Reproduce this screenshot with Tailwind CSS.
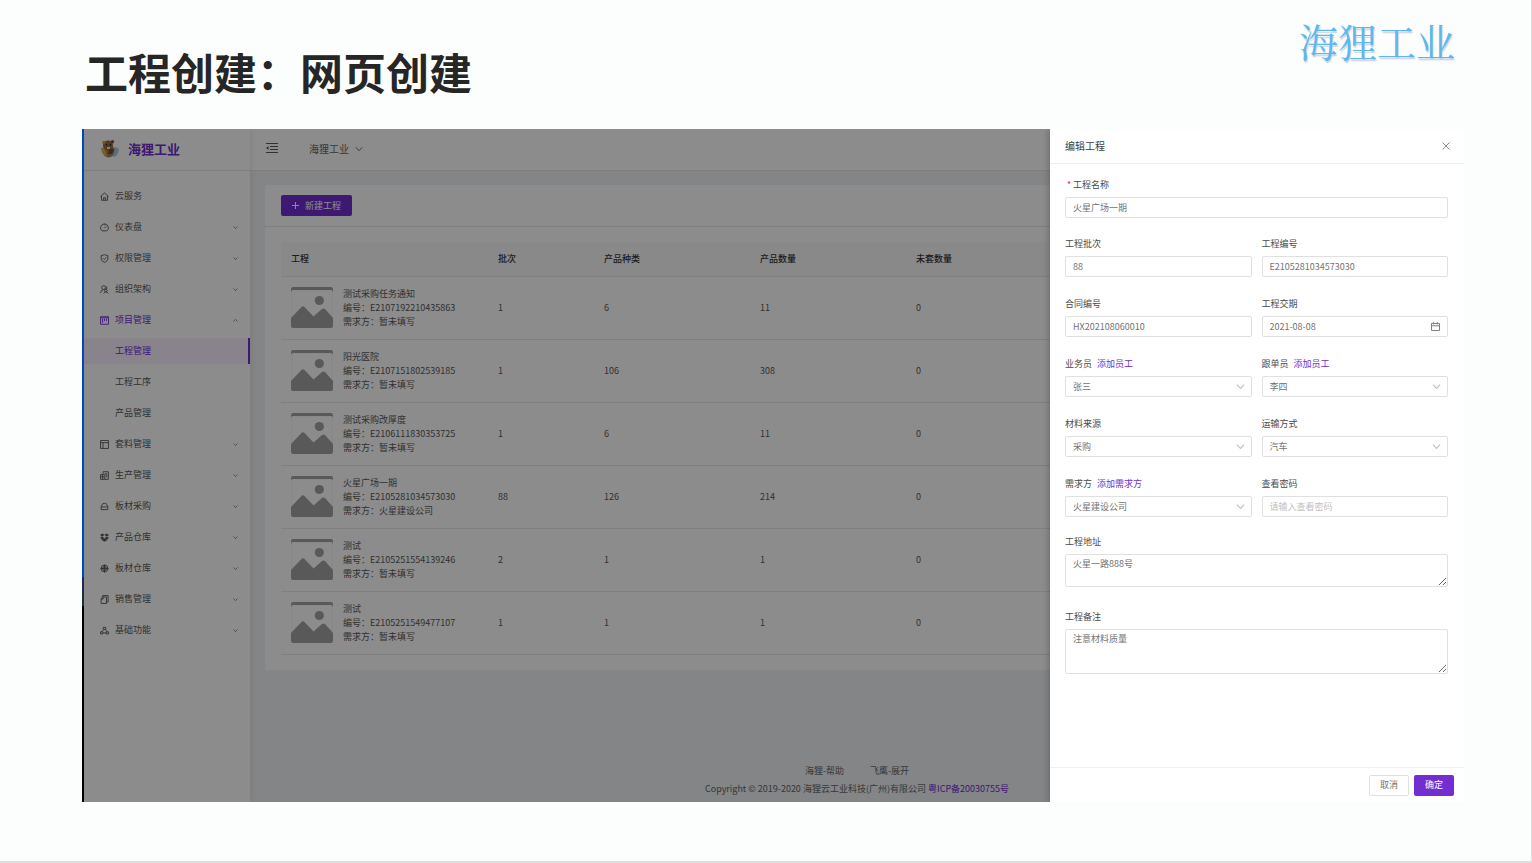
<!DOCTYPE html>
<html lang="zh-CN">
<head>
<meta charset="utf-8">
<title>工程创建：网页创建</title>
<script src="https://cdn.jsdelivr.net/npm/@tailwindcss/browser@4"></script>
</head>
<body class="min-h-screen bg-[#fcfefd] font-['Noto_Sans_CJK_SC',sans-serif]">
<svg class="hidden" aria-hidden="true">
  <symbol id="down" viewBox="0 0 10 10"><path d="M1 2.8 5 7.2 9 2.8" fill="none" stroke="currentColor" stroke-width="1.2"/></symbol>
  <symbol id="thumb" viewBox="0 0 42 42"><path d="M1 3h40v36H1z" fill="none" stroke="#000" stroke-opacity=".05"/><path d="M0 5V2q0-2 2-2h38q2 0 2 2v3l-1-2H1z" fill="#a3a3a3"/><circle cx="28.300" cy="13.500" r="4.600" fill="#a3a3a3"/><path d="M0 31 10.500 20q1.500-1.500 3 0L22.500 29.500 31 22q1.500-1 3 0l8 9v8q0 2-2 2H2q-2 0-2-2z" fill="#a3a3a3"/></symbol>
</svg>
<main class="flex min-h-screen flex-col border-r border-b-2 border-[#dcdddf]">
  <header class="flex h-[129px] shrink-0 items-start justify-between pr-[76px] pl-[85px]">
    <h1 class="pt-[39px] text-[43px] leading-[64px] font-bold text-[#262626]">工程创建：网页创建</h1>
    <div class="pt-4 font-['Noto_Serif_CJK_SC','Noto_Sans_CJK_SC',serif] text-[39px] leading-[48px] font-normal text-[#5bb8f0] text-shadow-[1px_2px_1px_#d2d2dc]">海狸工业</div>
  </header>

  <section class="relative mr-[67px] mb-[59px] ml-[82px] flex grow overflow-hidden text-[9px] leading-[14px] text-[#595959]">
    <div class="w-0.5 shrink-0 bg-linear-[to_bottom,#0046c8_66.600%,#1c2d4b_66.600%,#1c2d4b_70.900%,#000_70.900%]"></div>
    <div class="relative flex grow">
      <aside class="z-1 w-[166px] shrink-0 bg-white shadow-[2px_0_6px_rgba(0,21,41,.06)]">
        <div class="flex h-[42px] items-center gap-2 border-b border-[#e8e8e8] pb-px pl-4 text-[13px] font-bold text-[#722ed1]">
          <svg class="size-5" viewBox="0 0 20 20"><path d="M10 9q7-2 9 1-1 8-6 8z" fill="#a9cbe6"/><ellipse cx="8.500" cy="12" rx="6" ry="6.500" fill="#a57d5c"/><circle cx="8" cy="6.500" r="5" fill="#9a6840"/><circle cx="3.800" cy="3.400" r="1.600" fill="#d7a33c"/><circle cx="12.500" cy="2.700" r="1.700" fill="#785038"/><path d="M1 9q3-1 4 2l2 6q-5 0-6-8z" fill="#ddb04c"/><path d="M9 10h5l-2 5H8z" fill="#6e4c38"/><circle cx="6.500" cy="5.800" r=".8" fill="#222"/><circle cx="10.500" cy="5.800" r=".8" fill="#222"/><path d="M7 8h3v2H7z" fill="#f1e4cf"/></svg>
          海狸工业
        </div>
        <nav class="flex flex-col gap-[5px] pt-3 *:flex *:h-[26px] *:items-center *:pr-3 *:pl-4">
          <a href="#"><svg class="mr-1.5 size-[9px]" viewBox="0 0 10 10" fill="none" stroke="currentColor"><path d="M.5 5.200 5 1l4.500 4.200M1.700 4.500v4.700h6.600V4.500M4 9V6.300h2V9"/></svg>云服务</a>
          <a href="#"><svg class="mr-1.5 size-[9px]" viewBox="0 0 10 10" fill="none" stroke="currentColor"><path d="M2.300 8.700a4.300 4.300 0 1 1 5.400 0zM5 5.800 7 3.500M5 1.500v1"/></svg><span class="grow">仪表盘</span><svg class="size-[5px]"><use href="#down"/></svg></a>
          <a href="#"><svg class="mr-1.5 size-[9px]" viewBox="0 0 10 10" fill="none" stroke="currentColor"><path d="M1.300 1.800 5 .8l3.700 1v4Q8 8.500 5 9.300 2 8.500 1.300 5.800zM3.300 4.800l1.400 1.400 2.300-2.500"/></svg><span class="grow">权限管理</span><svg class="size-[5px]"><use href="#down"/></svg></a>
          <a href="#"><svg class="mr-1.5 size-[9px]" viewBox="0 0 10 10" fill="none" stroke="currentColor"><circle cx="4" cy="2.900" r="2.100"/><path d="M.6 9q0-3.500 3.400-4M6.500 1.300q2.300.9.700 3.400"/><circle cx="6.500" cy="6.200" r="1.400"/><path d="M4.200 9.500Q5 7.500 6.500 7.500T9.300 9.500"/></svg><span class="grow">组织架构</span><svg class="size-[5px]"><use href="#down"/></svg></a>
          <a href="#" class="text-[#722ed1]"><svg class="mr-1.5 size-[9px]" viewBox="0 0 10 10" fill="none" stroke="currentColor"><path d="M.6.800h8.800v8.400H.6zM2.800 3v4.500M5 3v2.500M7.200 3v2.500M.6 2h8.800"/></svg><span class="grow">项目管理</span><svg class="size-[5px] rotate-180 text-[#595959]"><use href="#down"/></svg></a>
          <a href="#" class="border-r-2 border-[#722ed1] bg-[#f9f0ff] text-[#722ed1]"><span class="pl-[15px]">工程管理</span></a>
          <a href="#"><span class="pl-[15px]">工程工序</span></a>
          <a href="#"><span class="pl-[15px]">产品管理</span></a>
          <a href="#"><svg class="mr-1.5 size-[9px]" viewBox="0 0 10 10" fill="none" stroke="currentColor"><path d="M.6.600h8.800v8.800H.6zM.6 3h8.800M3.300 3v6.400"/></svg><span class="grow">套料管理</span><svg class="size-[5px]"><use href="#down"/></svg></a>
          <a href="#"><svg class="mr-1.5 size-[9px]" viewBox="0 0 10 10" fill="none" stroke="currentColor"><path d="M3.500 3V.8H9.300v8.500H5.500M.6 4h4.800v5.300H.6zM3 4v5M.6 6.500h4.800M5.500 3h2v4"/></svg><span class="grow">生产管理</span><svg class="size-[5px]"><use href="#down"/></svg></a>
          <a href="#"><svg class="mr-1.5 size-[9px]" viewBox="0 0 10 10" fill="none" stroke="currentColor"><path d="M1.300 5 2.500 3q0-1.500 2.500-1.500T7.500 3l1.200 2v3.500H1.300zM1.300 5.500h7.400"/></svg><span class="grow">板材采购</span><svg class="size-[5px]"><use href="#down"/></svg></a>
          <a href="#"><svg class="mr-1.5 size-[9px]" viewBox="0 0 10 10" fill="currentColor"><path d="M3 .6 5 2.200 2.300 4 0 2.200zM7 .6l3 1.600L7.700 4 5 2.200zM0 5.500 2.300 4 5 5.800 3 7.200zM10 5.500 7.700 4 5 5.800l2 1.400zM1.800 6.800 3 7.600 5 6.200l2 1.400 1.200-.8v1L5 9.800 1.800 7.800z"/></svg><span class="grow">产品仓库</span><svg class="size-[5px]"><use href="#down"/></svg></a>
          <a href="#"><svg class="mr-1.5 size-[9px]" viewBox="0 0 10 10" fill="none" stroke="currentColor"><circle cx="5" cy="5" r="3.800"/><path d="M5 .500v9M.5 5h9M3.300 3.300h3.400v3.400H3.300z"/></svg><span class="grow">板材仓库</span><svg class="size-[5px]"><use href="#down"/></svg></a>
          <a href="#"><svg class="mr-1.5 size-[9px]" viewBox="0 0 10 10" fill="none" stroke="currentColor"><path d="M3 2V.6h6v7.200H7.300M1.200 4 3.300 2.200h3.900v7.200h-6zM3.500 2.500v2H1.300"/></svg><span class="grow">销售管理</span><svg class="size-[5px]"><use href="#down"/></svg></a>
          <a href="#"><svg class="mr-1.5 size-[9px]" viewBox="0 0 10 10" fill="none" stroke="currentColor"><path d="M3.600 1.500h2.800v2.300H3.600zM.6 6.500h2.600v2.300H.6zM6.800 6.500h2.600v2.300H6.800zM3.200 7.700h3.600M1.900 6.500 4 4M8.100 6.500 6 4"/></svg><span class="grow">基础功能</span><svg class="size-[5px]"><use href="#down"/></svg></a>
        </nav>
      </aside>

      <div class="flex grow flex-col bg-[#f0f2f5]">
        <div class="flex h-[42px] shrink-0 items-center border-b border-[#e4e6e9] bg-white pb-px pl-[15px]">
          <button aria-label="收起菜单" class="mr-[30px] pb-0.5"><svg class="h-3 w-3.5" viewBox="0 0 14 12" fill="none" stroke="#595959"><path d="M1 1.500h12M5 4.500h8M5 7.500h8M1 10.500h12"/><path d="M3.500 4v4L1 6z" fill="#595959" stroke="none"/></svg></button>
          <button class="flex items-center gap-1.5 text-[10px] text-[#666]">海狸工业<svg class="size-2"><use href="#down"/></svg></button>
        </div>
        <div class="mx-[15px] mt-3.5 rounded-xs bg-white pb-[15px]">
          <div class="flex h-[42px] items-center border-b border-[#e8e8e8] px-4">
            <button class="flex h-[21px] w-[71px] items-center justify-center gap-1.5 rounded-xs bg-[#722ed1] text-white"><svg class="size-[7px]" viewBox="0 0 7 7"><path d="M3.500 0v7M0 3.500h7" stroke="#fff"/></svg>新建工程</button>
          </div>
          <div class="px-4 pt-[15px]">
            <table class="w-full table-fixed border-collapse text-left *:*:border-b *:*:border-[#e8e8e8]">
              <colgroup><col class="w-[207px]"><col class="w-[106px]"><col class="w-[156px]"><col class="w-[156px]"><col class="w-[156px]"><col></colgroup>
              <thead><tr class="h-[34px] bg-[#fafafa] text-[#333] *:pl-2.5 *:font-medium"><th>工程</th><th>批次</th><th>产品种类</th><th>产品数量</th><th>未套数量</th><td></td></tr></thead>
              <tbody>
                <tr class="h-[63px] *:pl-2.5"><td><div class="flex gap-2.5"><svg class="size-[42px]"><use href="#thumb"/></svg><p>测试采购任务通知<br>编号：E2107192210435863<br>需求方：暂未填写</p></div></td><td>1</td><td>6</td><td>11</td><td>0</td><td></td></tr>
                <tr class="h-[63px] *:pl-2.5"><td><div class="flex gap-2.5"><svg class="size-[42px]"><use href="#thumb"/></svg><p>阳光医院<br>编号：E2107151802539185<br>需求方：暂未填写</p></div></td><td>1</td><td>106</td><td>308</td><td>0</td><td></td></tr>
                <tr class="h-[63px] *:pl-2.5"><td><div class="flex gap-2.5"><svg class="size-[42px]"><use href="#thumb"/></svg><p>测试采购改厚度<br>编号：E2106111830353725<br>需求方：暂未填写</p></div></td><td>1</td><td>6</td><td>11</td><td>0</td><td></td></tr>
                <tr class="h-[63px] *:pl-2.5"><td><div class="flex gap-2.5"><svg class="size-[42px]"><use href="#thumb"/></svg><p>火星广场一期<br>编号：E2105281034573030<br>需求方：火星建设公司</p></div></td><td>88</td><td>126</td><td>214</td><td>0</td><td></td></tr>
                <tr class="h-[63px] *:pl-2.5"><td><div class="flex gap-2.5"><svg class="size-[42px]"><use href="#thumb"/></svg><p>测试<br>编号：E2105251554139246<br>需求方：暂未填写</p></div></td><td>2</td><td>1</td><td>1</td><td>0</td><td></td></tr>
                <tr class="h-[63px] *:pl-2.5"><td><div class="flex gap-2.5"><svg class="size-[42px]"><use href="#thumb"/></svg><p>测试<br>编号：E2105251549477107<br>需求方：暂未填写</p></div></td><td>1</td><td>1</td><td>1</td><td>0</td><td></td></tr>
              </tbody>
            </table>
          </div>
        </div>
        <footer class="mt-auto pb-1 text-center text-[#666] *:leading-[18px]">
          <div class="flex justify-center gap-[26px]"><a href="#">海狸-帮助</a><a href="#">飞鹰-展开</a></div>
          <p>Copyright © 2019-2020 海狸云工业科技(广州)有限公司 <a href="#" class="text-[#722ed1]">粤ICP备20030755号</a></p>
        </footer>
      </div>
      <div class="absolute inset-0 z-10 bg-black/45"></div>
    </div>

    <aside class="absolute inset-y-0 right-0 z-20 flex w-[414px] flex-col bg-white shadow-[-2px_0_6px_rgba(0,0,0,.2)]">
      <div class="flex h-[35px] shrink-0 items-center justify-between border-b border-[#efefef] pr-3.5 pl-[15px]">
        <h2 class="text-[10px] text-[#404040]">编辑工程</h2>
        <button aria-label="关闭"><svg class="size-2" viewBox="0 0 8 8"><path d="M.5.500l7 7M7.500.500l-7 7" stroke="#8c8c8c"/></svg></button>
      </div>
      <form class="grow pt-[13px] pr-4 pl-[15px] text-[#737373]">
        <div class="mb-[18px] flex flex-col gap-1"><label for="name" class="flex leading-4 text-[#4a4a4a]"><span class="w-2 pl-0.5 text-[#f5222d]">*</span>工程名称</label><input id="name" value="火星广场一期" class="h-[21px] w-full rounded-xs border border-[#e0e0e0] px-[7px]"></div>
        <div class="mb-[17px] grid grid-cols-2 gap-x-2.5 gap-y-[19px] *:flex *:flex-col *:gap-1">
          <div><label for="batch" class="leading-4 text-[#4a4a4a]">工程批次</label><input id="batch" value="88" class="h-[21px] w-full rounded-xs border border-[#e0e0e0] px-[7px]"></div>
          <div><label for="code" class="leading-4 text-[#4a4a4a]">工程编号</label><input id="code" value="E2105281034573030" class="h-[21px] w-full rounded-xs border border-[#e0e0e0] px-[7px]"></div>
          <div><label for="contract" class="leading-4 text-[#4a4a4a]">合同编号</label><input id="contract" value="HX202108060010" class="h-[21px] w-full rounded-xs border border-[#e0e0e0] px-[7px]"></div>
          <div><label for="date" class="leading-4 text-[#4a4a4a]">工程交期</label><div class="relative"><input id="date" value="2021-08-08" class="block h-[21px] w-full rounded-xs border border-[#e0e0e0] px-[7px]"><svg class="absolute top-1.5 right-2 size-[9px]" viewBox="0 0 9 9" fill="none" stroke="#808080"><path d="M.5 1.500h8v7h-8zM.5 3.800h8M2.700 0v2.500M6.300 0v2.500"/></svg></div></div>
          <div><div class="flex gap-[5px] leading-4"><label for="sales" class="text-[#4a4a4a]">业务员</label><a href="#" class="text-[#722ed1]">添加员工</a></div><div class="relative"><select id="sales" class="block h-[21px] w-full appearance-none rounded-xs border border-[#e0e0e0] px-[7px]"><option>张三</option></select><svg class="pointer-events-none absolute top-1.5 right-[7px] size-[9px] text-[#bfbfbf]"><use href="#down"/></svg></div></div>
          <div><div class="flex gap-[5px] leading-4"><label for="follow" class="text-[#4a4a4a]">跟单员</label><a href="#" class="text-[#722ed1]">添加员工</a></div><div class="relative"><select id="follow" class="block h-[21px] w-full appearance-none rounded-xs border border-[#e0e0e0] px-[7px]"><option>李四</option></select><svg class="pointer-events-none absolute top-1.5 right-[7px] size-[9px] text-[#bfbfbf]"><use href="#down"/></svg></div></div>
          <div><label for="source" class="leading-4 text-[#4a4a4a]">材料来源</label><div class="relative"><select id="source" class="block h-[21px] w-full appearance-none rounded-xs border border-[#e0e0e0] px-[7px]"><option>采购</option></select><svg class="pointer-events-none absolute top-1.5 right-[7px] size-[9px] text-[#bfbfbf]"><use href="#down"/></svg></div></div>
          <div><label for="ship" class="leading-4 text-[#4a4a4a]">运输方式</label><div class="relative"><select id="ship" class="block h-[21px] w-full appearance-none rounded-xs border border-[#e0e0e0] px-[7px]"><option>汽车</option></select><svg class="pointer-events-none absolute top-1.5 right-[7px] size-[9px] text-[#bfbfbf]"><use href="#down"/></svg></div></div>
          <div><div class="flex gap-[5px] leading-4"><label for="client" class="text-[#4a4a4a]">需求方</label><a href="#" class="text-[#722ed1]">添加需求方</a></div><div class="relative"><select id="client" class="block h-[21px] w-full appearance-none rounded-xs border border-[#e0e0e0] px-[7px]"><option>火星建设公司</option></select><svg class="pointer-events-none absolute top-1.5 right-[7px] size-[9px] text-[#bfbfbf]"><use href="#down"/></svg></div></div>
          <div><label for="pwd" class="leading-4 text-[#4a4a4a]">查看密码</label><input id="pwd" placeholder="请输入查看密码" class="h-[21px] w-full rounded-xs border border-[#e0e0e0] px-[7px] placeholder:text-[#bfbfbf]"></div>
        </div>
        <div class="mb-[22px] flex flex-col gap-1"><label for="addr" class="leading-4 text-[#4a4a4a]">工程地址</label><textarea id="addr" class="h-[33px] w-full rounded-xs border border-[#e0e0e0] px-[7px] py-0.5">火星一路888号</textarea></div>
        <div class="flex flex-col gap-1"><label for="note" class="leading-4 text-[#4a4a4a]">工程备注</label><textarea id="note" class="h-[45px] w-full rounded-xs border border-[#e0e0e0] px-[7px] py-0.5">注意材料质量</textarea></div>
      </form>
      <div class="flex h-[35px] shrink-0 items-center justify-end gap-[5px] border-t border-[#efefef] pr-2.5">
        <button class="h-[21px] w-10 rounded-xs border border-[#e0e0e0] text-[#737373]">取消</button>
        <button class="h-[21px] w-10 rounded-xs bg-[#722ed1] text-white">确定</button>
      </div>
    </aside>
  </section>
</main>
</body>
</html>
